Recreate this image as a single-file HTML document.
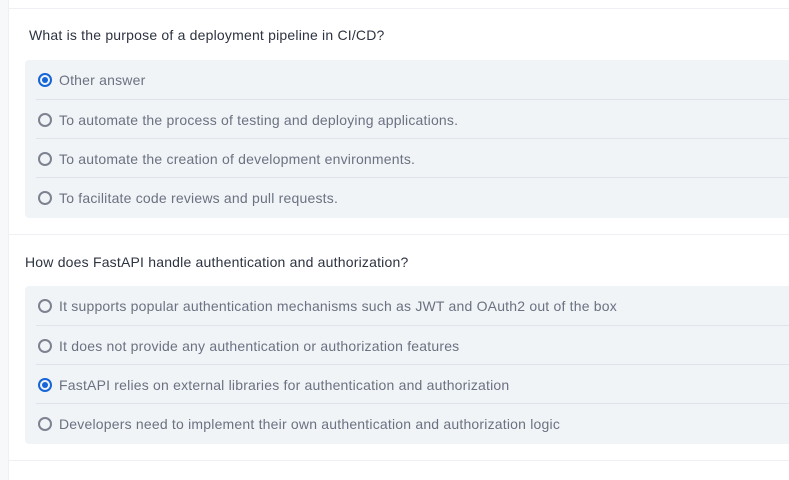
<!DOCTYPE html><html><head><style>
body{margin:0;width:789px;height:480px;background:#fff;font-family:"Liberation Sans",sans-serif;position:relative;overflow:hidden}
.strip{position:absolute;left:0;top:0;width:8px;height:480px;background:#f7f8fa;border-right:1px solid #eef0f3}
.hl{position:absolute;left:9px;right:0;height:1px;background:#eef0f3}
.q{position:absolute;font-size:14px;color:#2d3340;letter-spacing:0.2px}
.panel{position:absolute;left:25px;width:770px;height:158px;background:#f1f4f7;border-radius:4px}
.row{position:absolute;left:11px;right:0;height:39px;line-height:41px;font-size:14px;color:#6b7180;padding-left:23px;letter-spacing:0.2px}
.row+.row{border-top:1px solid #e0e4ea}
.r{position:absolute;left:2px;top:13px;width:10px;height:10px;border:2px solid #7d8290;border-radius:50%}
.r.on{border-color:#1565d8}
.r.on::after{content:"";position:absolute;left:2px;top:2px;width:6px;height:6px;border-radius:50%;background:#1565d8}
</style></head><body>
<div class="strip"></div>
<div class="hl" style="top:8px"></div>
<div class="q" style="left:29px;top:27px">What is the purpose of a deployment pipeline in CI/CD?</div>
<div class="panel" style="top:60px">
<div class="row" style="top:0"><span class="r on"></span>Other answer</div>
<div class="row" style="top:39px"><span class="r"></span>To automate the process of testing and deploying applications.</div>
<div class="row" style="top:78px"><span class="r"></span>To automate the creation of development environments.</div>
<div class="row" style="top:117px"><span class="r"></span>To facilitate code reviews and pull requests.</div>
</div>
<div class="hl" style="top:234px"></div>
<div class="q" style="left:25px;top:254px">How does FastAPI handle authentication and authorization?</div>
<div class="panel" style="top:286px">
<div class="row" style="top:0"><span class="r"></span>It supports popular authentication mechanisms such as JWT and OAuth2 out of the box</div>
<div class="row" style="top:39px"><span class="r"></span>It does not provide any authentication or authorization features</div>
<div class="row" style="top:78px"><span class="r on"></span>FastAPI relies on external libraries for authentication and authorization</div>
<div class="row" style="top:117px"><span class="r"></span>Developers need to implement their own authentication and authorization logic</div>
</div>
<div class="hl" style="top:460px"></div>
</body></html>
